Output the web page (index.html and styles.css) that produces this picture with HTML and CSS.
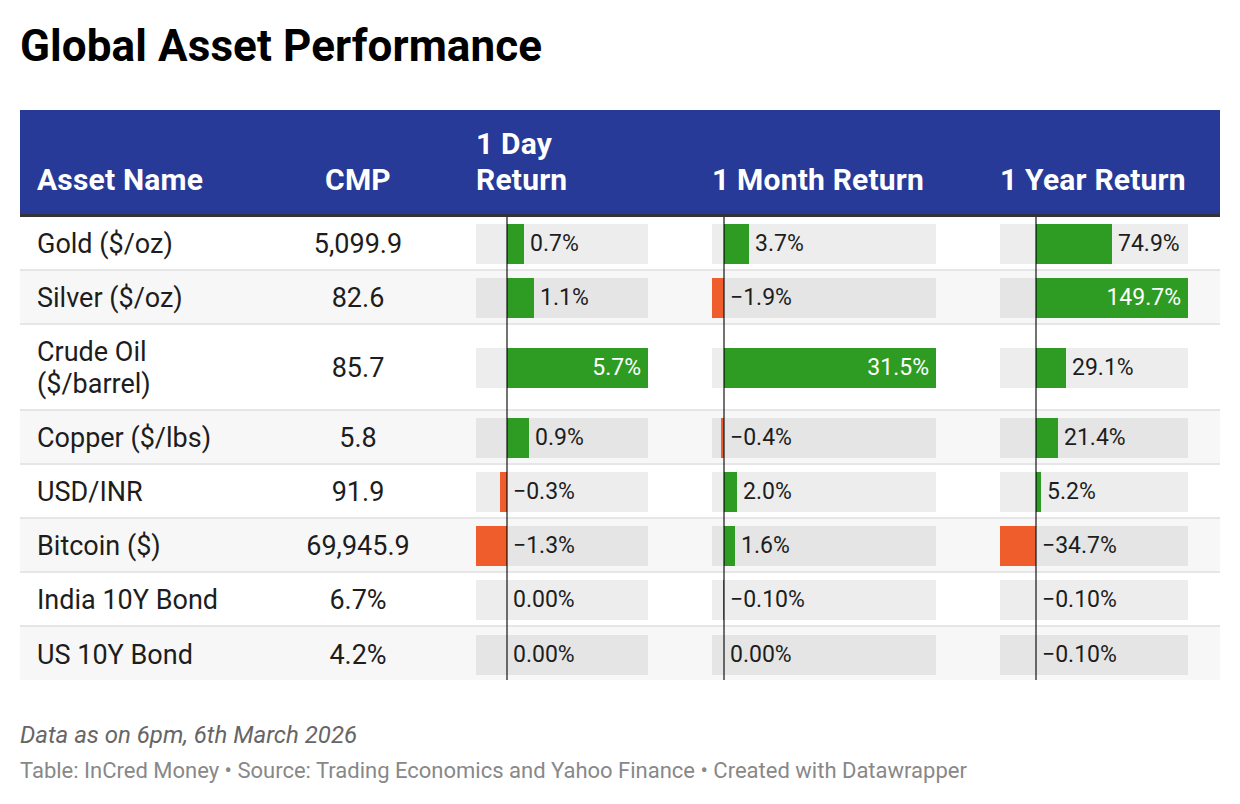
FILE: index.html
```html
<!DOCTYPE html>
<html lang="en">
<head>
<meta charset="utf-8">
<title>Global Asset Performance</title>
<link rel="stylesheet" href="styles.css">
</head>
<body>
<h1 class="title">Global Asset Performance</h1>
<div class="table">
  <div class="row head">
    <div class="cell name">Asset Name</div>
    <div class="cell cmp">CMP</div>
    <div class="cell ret day">1 Day<br>Return</div>
    <div class="cell ret month">1 Month Return</div>
    <div class="cell ret year">1 Year Return</div>
  </div>

  <div class="row">
    <div class="cell name">Gold ($/oz)</div>
    <div class="cell cmp">5,099.9</div>
    <div class="cell ret day"><div class="track"><span class="bar pos" style="margin-left:31px;width:17px"></span><span class="lbl">0.7%</span></div></div>
    <div class="cell ret month"><div class="track"><span class="bar pos" style="margin-left:12px;width:25px"></span><span class="lbl">3.7%</span></div></div>
    <div class="cell ret year"><div class="track"><span class="bar pos" style="margin-left:36px;width:76px"></span><span class="lbl">74.9%</span></div></div>
  </div>

  <div class="row alt">
    <div class="cell name">Silver ($/oz)</div>
    <div class="cell cmp">82.6</div>
    <div class="cell ret day"><div class="track"><span class="bar pos" style="margin-left:31px;width:27px"></span><span class="lbl">1.1%</span></div></div>
    <div class="cell ret month"><div class="track"><span class="bar neg" style="margin-left:0;width:12px"></span><span class="lbl">−1.9%</span></div></div>
    <div class="cell ret year"><div class="track"><span class="bar pos inside" style="margin-left:36px;width:152px"><span class="lbl-in">149.7%</span></span></div></div>
  </div>

  <div class="row tall">
    <div class="cell name">Crude Oil<br>($/barrel)</div>
    <div class="cell cmp">85.7</div>
    <div class="cell ret day"><div class="track"><span class="bar pos inside" style="margin-left:31px;width:141px"><span class="lbl-in">5.7%</span></span></div></div>
    <div class="cell ret month"><div class="track"><span class="bar pos inside" style="margin-left:12px;width:212px"><span class="lbl-in">31.5%</span></span></div></div>
    <div class="cell ret year"><div class="track"><span class="bar pos" style="margin-left:36px;width:30px"></span><span class="lbl">29.1%</span></div></div>
  </div>

  <div class="row alt">
    <div class="cell name">Copper ($/lbs)</div>
    <div class="cell cmp">5.8</div>
    <div class="cell ret day"><div class="track"><span class="bar pos" style="margin-left:31px;width:22px"></span><span class="lbl">0.9%</span></div></div>
    <div class="cell ret month"><div class="track"><span class="bar neg" style="margin-left:9px;width:3px"></span><span class="lbl">−0.4%</span></div></div>
    <div class="cell ret year"><div class="track"><span class="bar pos" style="margin-left:36px;width:22px"></span><span class="lbl">21.4%</span></div></div>
  </div>

  <div class="row">
    <div class="cell name">USD/INR</div>
    <div class="cell cmp">91.9</div>
    <div class="cell ret day"><div class="track"><span class="bar neg" style="margin-left:24px;width:7px"></span><span class="lbl">−0.3%</span></div></div>
    <div class="cell ret month"><div class="track"><span class="bar pos" style="margin-left:12px;width:13px"></span><span class="lbl">2.0%</span></div></div>
    <div class="cell ret year"><div class="track"><span class="bar pos" style="margin-left:36px;width:5px"></span><span class="lbl">5.2%</span></div></div>
  </div>

  <div class="row alt">
    <div class="cell name">Bitcoin ($)</div>
    <div class="cell cmp">69,945.9</div>
    <div class="cell ret day"><div class="track"><span class="bar neg" style="margin-left:0;width:31px"></span><span class="lbl">−1.3%</span></div></div>
    <div class="cell ret month"><div class="track"><span class="bar pos" style="margin-left:12px;width:11px"></span><span class="lbl">1.6%</span></div></div>
    <div class="cell ret year"><div class="track"><span class="bar neg" style="margin-left:0;width:36px"></span><span class="lbl">−34.7%</span></div></div>
  </div>

  <div class="row">
    <div class="cell name">India 10Y Bond</div>
    <div class="cell cmp">6.7%</div>
    <div class="cell ret day"><div class="track"><span class="bar" style="margin-left:31px;width:0"></span><span class="lbl">0.00%</span></div></div>
    <div class="cell ret month"><div class="track"><span class="bar neg" style="margin-left:11px;width:1px"></span><span class="lbl">−0.10%</span></div></div>
    <div class="cell ret year"><div class="track"><span class="bar" style="margin-left:36px;width:0"></span><span class="lbl">−0.10%</span></div></div>
  </div>

  <div class="row alt last">
    <div class="cell name">US 10Y Bond</div>
    <div class="cell cmp">4.2%</div>
    <div class="cell ret day"><div class="track"><span class="bar" style="margin-left:31px;width:0"></span><span class="lbl">0.00%</span></div></div>
    <div class="cell ret month"><div class="track"><span class="bar" style="margin-left:12px;width:0"></span><span class="lbl">0.00%</span></div></div>
    <div class="cell ret year"><div class="track"><span class="bar" style="margin-left:36px;width:0"></span><span class="lbl">−0.10%</span></div></div>
  </div>
</div>

<p class="note">Data as on 6pm, 6th March 2026</p>
<p class="credit">Table: InCred Money • Source: Trading Economics and Yahoo Finance • Created with Datawrapper</p>
</body>
</html>
```

FILE: styles.css
```css
* { box-sizing: border-box; }

body {
  margin: 0;
  padding: 0 20px;
  background: #ffffff;
  font-family: Roboto, "Noto Sans", Arial, sans-serif;
  color: #1d1d1d;
}

.title {
  margin: 22px 0 40px;
  font-size: 44px;
  line-height: 48px;
  font-weight: 700;
  color: #000;
  letter-spacing: 0.1px;
}

.table {
  width: 1200px;
}

.row {
  display: grid;
  grid-template-columns: 252px 172px 236px 288px 252px;
  height: 54px;
  border-bottom: 2px solid #e6e6e6;
  background: #ffffff;
}

.row.alt { background: #f7f7f7; }
.row.tall { height: 86px; }
.row.last { border-bottom: none; height: 53px; }

.row.head {
  height: 107px;
  background: #283a97;
  border-bottom: 3px solid #333333;
  color: #ffffff;
  font-weight: 700;
}

.cell {
  display: flex;
  align-items: center;
  padding-top: 2px;
  font-size: 27px;
  line-height: 32px;
}

.head .cell {
  align-items: flex-end;
  padding-top: 0;
  padding-bottom: 16px;
  font-size: 30px;
  line-height: 36px;
  letter-spacing: 0.2px;
}

.name { padding-left: 17px; }
.cmp { justify-content: center; }

.ret {
  position: relative;
  padding-left: 32px;
  padding-right: 32px;
}

.head .ret { white-space: nowrap; }

.track {
  display: flex;
  align-items: center;
  width: 100%;
  height: 40px;
  background: rgba(0, 0, 0, 0.072);
  font-size: 23px;
  color: #1d1d1d;
  letter-spacing: 0;
}

.bar {
  height: 40px;
  flex: none;
  display: flex;
  align-items: center;
  justify-content: flex-end;
}

.bar.pos { background: #2e9b22; }
.bar.neg { background: #f05d2c; }

.lbl {
  margin-left: 6px;
  white-space: nowrap;
}

.lbl-in {
  color: #ffffff;
  padding-right: 7px;
  white-space: nowrap;
}

/* zero baseline line that runs over the bars */
.row:not(.head) .ret::after {
  content: "";
  position: absolute;
  top: 0;
  bottom: -2px;
  width: 2px;
  background: rgba(0, 0, 0, 0.55);
}
.row.last .ret::after { bottom: 0; }
.row:not(.head) .day::after { left: 62px; }
.row:not(.head) .month::after { left: 43px; }
.row:not(.head) .year::after { left: 67px; }

.note {
  margin: 41px 0 0;
  font-size: 24px;
  line-height: 28px;
  font-style: italic;
  color: #666666;
}

.credit {
  margin: 9px 0 0;
  font-size: 22px;
  line-height: 26px;
  color: #888888;
}
```
